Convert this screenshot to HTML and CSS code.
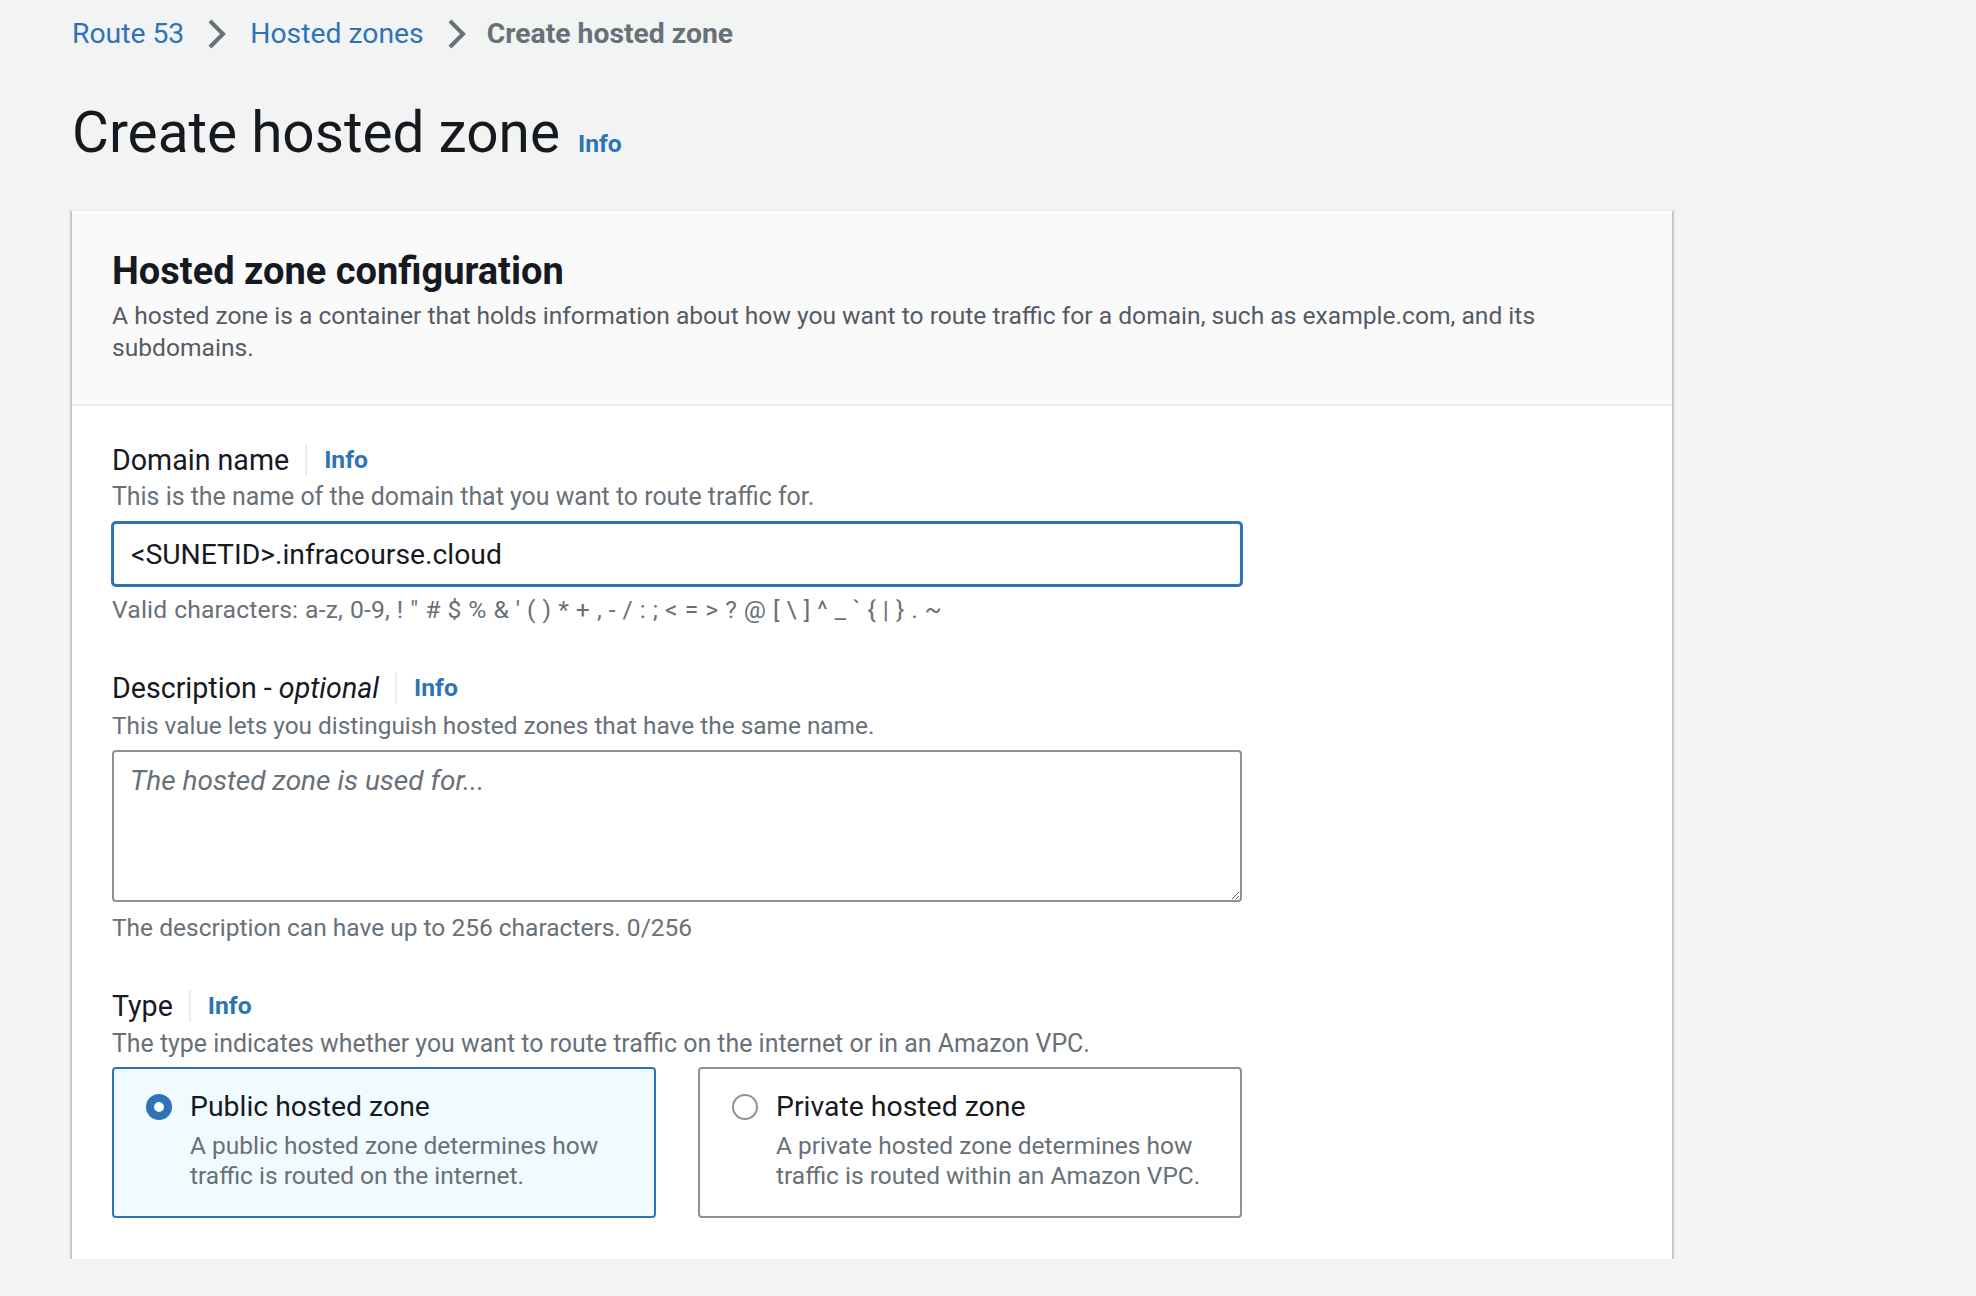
FILE: index.html
```html
<!DOCTYPE html>
<html lang="en">
<head>
<meta charset="utf-8">
<title>Create hosted zone</title>
<link rel="stylesheet" href="styles.css">
</head>
<body>
<div class="page">
  <nav class="breadcrumbs">
    <a class="crumb-link" href="#">Route 53</a>
    <svg class="chevron" width="18" height="30" viewBox="0 0 18 30"><path d="M2 2 L15 15 L2 28" fill="none" stroke="#687078" stroke-width="4"/></svg>
    <a class="crumb-link" href="#">Hosted zones</a>
    <svg class="chevron" width="18" height="30" viewBox="0 0 18 30"><path d="M2 2 L15 15 L2 28" fill="none" stroke="#687078" stroke-width="4"/></svg>
    <span class="crumb-current">Create hosted zone</span>
  </nav>

  <div class="page-header">
    <h1 class="page-title">Create hosted zone</h1>
    <a class="info-link" href="#">Info</a>
  </div>

  <section class="container">
    <div class="container-header">
      <h2 class="container-title">Hosted zone configuration</h2>
      <p class="container-desc">A hosted zone is a container that holds information about how you want to route traffic for a domain, such as example.com, and its subdomains.</p>
    </div>

    <div class="container-body">
      <div class="field field-domain">
        <div class="label-row">
          <span class="label">Domain name</span>
          <span class="label-sep"></span>
          <a class="info-link" href="#">Info</a>
        </div>
        <div class="field-desc desc-domain">This is the name of the domain that you want to route traffic for.</div>
        <input class="text-input is-focused" type="text" value="&lt;SUNETID&gt;.infracourse.cloud">
        <div class="constraint constraint-chars">Valid characters: a-z, 0-9, ! " # $ % &amp; ' ( ) * + , - / : ; &lt; = &gt; ? @ [ \ ] ^ _ ` { | } . ~</div>
      </div>

      <div class="field field-description">
        <div class="label-row">
          <span class="label">Description - <em>optional</em></span>
          <span class="label-sep"></span>
          <a class="info-link" href="#">Info</a>
        </div>
        <div class="field-desc desc-description">This value lets you distinguish hosted zones that have the same name.</div>
        <textarea class="text-area" placeholder="The hosted zone is used for..."></textarea>
        <div class="constraint constraint-count">The description can have up to 256 characters. 0/256</div>
      </div>

      <div class="field field-type">
        <div class="label-row">
          <span class="label">Type</span>
          <span class="label-sep"></span>
          <a class="info-link" href="#">Info</a>
        </div>
        <div class="field-desc desc-type">The type indicates whether you want to route traffic on the internet or in an Amazon VPC.</div>
        <div class="tiles">
          <div class="tile is-selected">
            <span class="radio is-checked"></span>
            <div class="tile-text">
              <div class="tile-title">Public hosted zone</div>
              <div class="tile-desc">A public hosted zone determines how traffic is routed on the internet.</div>
            </div>
          </div>
          <div class="tile">
            <span class="radio"></span>
            <div class="tile-text">
              <div class="tile-title">Private hosted zone</div>
              <div class="tile-desc">A private hosted zone determines how traffic is routed within an Amazon VPC.</div>
            </div>
          </div>
        </div>
      </div>
    </div>
  </section>
</div>
</body>
</html>
```

FILE: styles.css
```css
* { box-sizing: border-box; }

html, body {
  margin: 0;
  padding: 0;
  background: #f2f3f3;
}

body {
  font-family: Roboto, "Liberation Sans", Arial, sans-serif;
  color: #16191f;
  font-size: 28px;
  line-height: 40px;
}

.page {
  padding: 14px 0 0 72px;
}

/* Breadcrumbs */
.breadcrumbs {
  display: flex;
  align-items: center;
  gap: 24px;
  height: 40px;
  font-size: 28.3px;
  line-height: 40px;
}

.crumb-link {
  color: #2e73b8;
  text-decoration: none;
}

.crumb-current {
  color: #687078;
  font-weight: 700;
  margin-left: -3px;
}

.chevron {
  display: block;
}

/* Page header */
.page-header {
  display: flex;
  align-items: baseline;
  gap: 18px;
  margin-top: 43px;
}

.page-title {
  margin: 0;
  font-size: 56.7px;
  line-height: 72px;
  font-weight: 400;
  color: #16191f;
}

.info-link {
  color: #2e73b8;
  font-weight: 700;
  font-size: 24.7px;
  text-decoration: none;
}

/* Container */
.container {
  width: 1600px;
  margin-top: 40px;
  background: #ffffff;
  border-top: 2px solid #eaeded;
  box-shadow: 0 2px 2px 0 rgba(0, 28, 36, 0.3), 2px 2px 2px 0 rgba(0, 28, 36, 0.15), -2px 2px 2px 0 rgba(0, 28, 36, 0.15);
}

.container-header {
  background: #fafafa;
  padding: 42px 40px 40px 40px;
  border-bottom: 2px solid #eaeded;
}

.container-title {
  margin: 0;
  font-size: 38px;
  line-height: 36px;
  font-weight: 700;
  color: #16191f;
}

.container-desc {
  margin: 11px 0 0 0;
  font-size: 24.6px;
  line-height: 32px;
  color: #545b64;
  max-width: 1460px;
}

.container-body {
  padding: 34px 40px 41px 40px;
}

/* Fields */
.field {
  width: 1130px;
}

.field-description { margin-top: 42px; }
.field-type { margin-top: 42px; }

.label-row {
  display: flex;
  align-items: center;
  height: 40px;
}

.label {
  font-size: 28.6px;
  line-height: 40px;
  color: #16191f;
}

.label em {
  font-style: italic;
}

.label-sep {
  width: 2px;
  height: 32px;
  background: #eaeded;
  margin: 0 17px 0 16px;
}

.field-desc {
  font-size: 24.7px;
  line-height: 32px;
  color: #687078;
  margin-top: 1px;
}

.desc-domain { font-size: 24.9px; }
.desc-description { font-size: 24.4px; }
.desc-type { font-size: 24.9px; }

.field-description .field-desc,
.field-type .field-desc {
  margin-top: 2px;
}

.text-input {
  display: block;
  width: 1130px;
  height: 64px;
  margin-top: 9px;
  padding: 0 17px;
  font-family: inherit;
  font-size: 28.3px;
  color: #16191f;
  background: #ffffff;
  border: 2px solid #2e73b8;
  border-radius: 4px;
  outline: none;
}

.text-input.is-focused {
  box-shadow: 0 0 0 1px #2e73b8;
}

.constraint {
  font-size: 24.7px;
  line-height: 32px;
  color: #687078;
  margin-top: 8px;
}

.constraint-chars {
  word-spacing: 0.6px;
  letter-spacing: 0.15px;
}

.text-area {
  display: block;
  width: 1130px;
  height: 152px;
  margin-top: 8px;
  padding: 9px 16px;
  font-family: inherit;
  font-size: 28px;
  line-height: 40px;
  color: #16191f;
  background: #ffffff;
  border: 2px solid #879596;
  border-radius: 4px;
  outline: none;
  resize: vertical;
}

.text-area::placeholder {
  color: #687078;
  font-style: italic;
  opacity: 1;
}

.constraint-count {
  margin-top: 10px;
  font-size: 24.5px;
}

/* Tiles */
.tiles {
  display: grid;
  grid-template-columns: 1fr 1fr;
  gap: 42px;
  margin-top: 7px;
}

.tile {
  display: flex;
  align-items: flex-start;
  gap: 18px;
  height: 151px;
  padding: 18px 32px 22px 32px;
  border: 2px solid #879596;
  border-radius: 4px;
  background: #ffffff;
}

.tile.is-selected {
  border-color: #2e73b8;
  background: #f1faff;
}

.radio {
  flex: none;
  width: 26px;
  height: 26px;
  margin-top: 7px;
  border-radius: 50%;
  border: 2px solid #879596;
  background: #ffffff;
}

.radio.is-checked {
  border: 8px solid #2e73b8;
  background: #ffffff;
}

.tile-title {
  font-size: 28.4px;
  line-height: 40px;
  color: #16191f;
}

.tile-desc {
  margin-top: 4px;
  font-size: 24.5px;
  line-height: 30px;
  color: #687078;
}
```
